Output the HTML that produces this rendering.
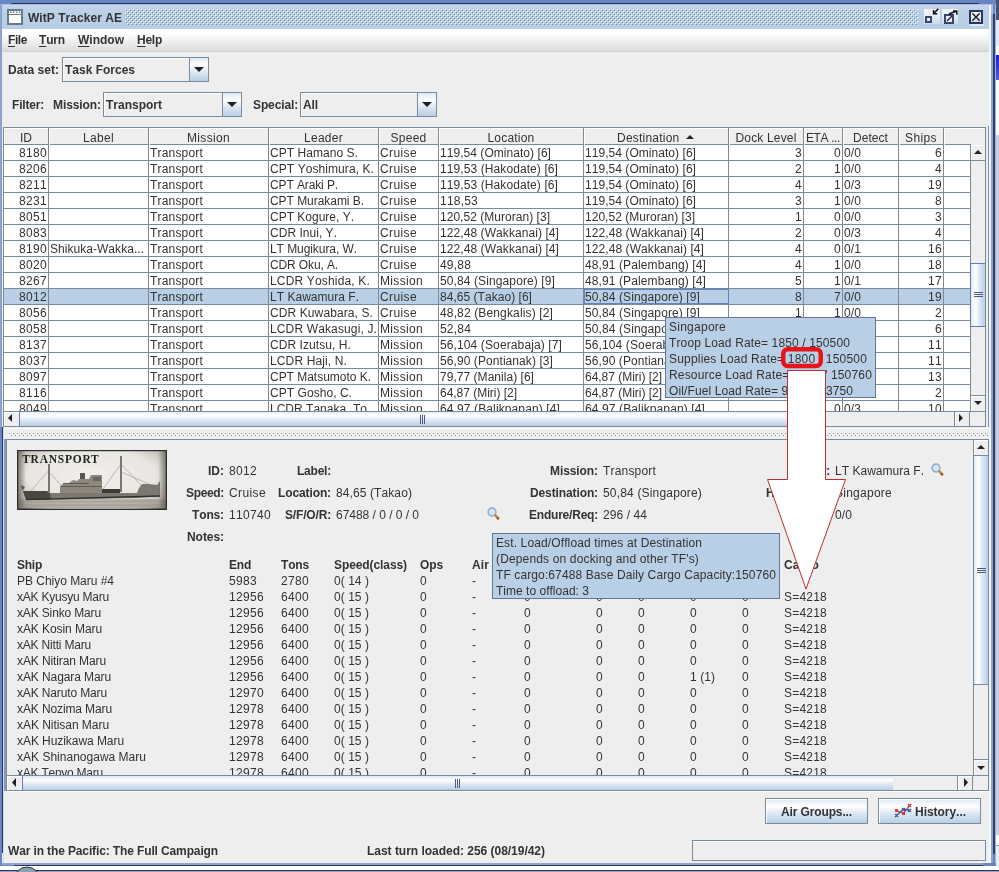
<!DOCTYPE html><html><head><meta charset="utf-8"><style>
*{margin:0;padding:0;box-sizing:border-box}
html,body{width:999px;height:872px;overflow:hidden;background:#6a85c4;position:relative}
.a{position:absolute}
.t{position:absolute;font-family:"Liberation Sans",sans-serif;font-size:12px;line-height:16px;color:#333;white-space:nowrap;font-kerning:none}
.b{font-weight:bold}
.grad{background:linear-gradient(#dde8f3 0%,#fff 30%,#dde8f3 60%,#b8cfe5 100%)}
.gradh{background:linear-gradient(to right,#dde8f3 0%,#fff 30%,#dde8f3 60%,#b8cfe5 100%)}
u{text-decoration-thickness:1px;text-underline-offset:2px}
</style></head><body><div id="w" style="position:absolute;left:0;top:0;width:999px;height:872px;overflow:hidden;will-change:transform">
<div class="a " style="left:0px;top:0px;width:999px;height:872px;background:#6a85c4"></div>
<div class="a " style="left:11px;top:3px;width:968px;height:1px;background:#2a3560"></div>
<div class="a " style="left:1px;top:4px;width:992px;height:859px;background:#a8bce0"></div>
<div class="a " style="left:2px;top:5px;width:987px;height:858px;background:#eeeeee"></div>
<div class="a " style="left:0px;top:4px;width:1px;height:423px;background:#8aa4dc"></div>
<div class="a " style="left:1px;top:5px;width:1px;height:422px;background:#8a9cc0"></div>
<div class="a " style="left:989px;top:5px;width:1px;height:858px;background:#f4f6fa"></div>
<div class="a " style="left:990px;top:5px;width:1px;height:858px;background:#f0f3f8"></div>
<div class="a " style="left:991px;top:14px;width:2px;height:849px;background:#8fa5cc"></div>
<div class="a " style="left:993px;top:14px;width:2px;height:840px;background:#2f3d6a"></div>
<div class="a " style="left:995px;top:4px;width:1px;height:859px;background:#a0b4e0"></div>
<div class="a " style="left:0px;top:427px;width:2px;height:436px;background:#6a85c4"></div>
<div class="a " style="left:2px;top:427px;width:1px;height:426px;background:#2a3560"></div>
<div class="a " style="left:3px;top:427px;width:1px;height:436px;background:#d0dcf0"></div>
<div class="a " style="left:4px;top:427px;width:2px;height:364px;background:#8898b8"></div>
<div class="a " style="left:2px;top:863px;width:991px;height:2px;background:#8fa5cc"></div>
<div class="a " style="left:14px;top:865px;width:969px;height:1px;background:#2a3560"></div>
<div class="a " style="left:983px;top:863px;width:13px;height:3px;background:#6a85c4"></div>
<div class="a " style="left:2px;top:5px;width:987px;height:24px;background:linear-gradient(#c4d6ea,#b8cfe5 40%,#b8cfe5)"></div>
<div class="a " style="left:2px;top:29px;width:987px;height:22px;background:linear-gradient(#ffffff 20%,#dcdcdc)"></div>
<div class="a " style="left:2px;top:51px;width:987px;height:1px;background:#d0d0d0"></div>
<svg class="a" style="left:7px;top:9px" width="16" height="16"><rect x="1" y="1" width="14" height="14" fill="#fff" stroke="#6a7a88" stroke-width="2"/><rect x="2" y="5" width="12" height="1" fill="#6a7a88"/>
<circle cx="3.8" cy="3.3" r="0.8" fill="#555"/><circle cx="6.8" cy="3.3" r="0.8" fill="#555"/><circle cx="9.8" cy="3.3" r="0.8" fill="#555"/><circle cx="12.6" cy="3.3" r="0.8" fill="#555"/></svg>
<div class="t b" style="left:28px;top:10px;letter-spacing:0.042px;">WitP Tracker AE</div>
<svg class="a" style="left:125px;top:9px" width="793" height="16"><defs><pattern id="bp" width="4" height="4" patternUnits="userSpaceOnUse"><rect x="0" y="0" width="1" height="1" fill="#fff"/><rect x="1" y="1" width="1" height="1" fill="#6a8ab4"/><rect x="2" y="2" width="1" height="1" fill="#fff"/><rect x="3" y="3" width="1" height="1" fill="#6a8ab4"/></pattern></defs><rect width="793" height="16" fill="url(#bp)"/></svg>
<svg class="a" style="left:920px;top:5px" width="70" height="23">
<defs><linearGradient id="tbg" x1="0" y1="0" x2="0" y2="1"><stop offset="0" stop-color="#f4f8fc"/><stop offset="0.5" stop-color="#e4ecf6"/><stop offset="1" stop-color="#c8d8ea"/></linearGradient></defs>
<rect x="4" y="4" width="16" height="15" fill="url(#tbg)"/>
<rect x="6" y="12" width="5" height="5" fill="#e8e8f8" stroke="#3a4570" stroke-width="2"/>
<path d="M18.3,3.8 L13.5,8.6 M13.5,5 L13.5,8.8 L17.3,8.8" stroke="#111" stroke-width="1.5" fill="none"/>
<rect x="22" y="4" width="16" height="15" fill="url(#tbg)"/>
<rect x="25" y="10" width="8" height="8" fill="#e8ecf8" stroke="#3a4570" stroke-width="2"/>
<path d="M27,16 L32,11" stroke="#111" stroke-width="1.1"/>
<path d="M29,9 L36.2,6.3 M33,6 L36.8,6 L36.8,9.8" stroke="#111" stroke-width="1.5" fill="none"/>
<rect x="50" y="6" width="12" height="12" fill="url(#tbg)" stroke="#2a3560" stroke-width="2"/>
<path d="M63,19 L63,20 L50,20" stroke="#fff" stroke-width="1.2" fill="none"/>
<path d="M52.3,8.3 L59.7,15.7 M59.7,8.3 L52.3,15.7" stroke="#111" stroke-width="1.3"/>
</svg>
<div class="t b" style="left:8px;top:32px;letter-spacing:-0.418px;"><u>F</u>ile</div>
<div class="t b" style="left:39px;top:32px;letter-spacing:-0.165px;"><u>T</u>urn</div>
<div class="t b" style="left:78px;top:32px;letter-spacing:0.003px;"><u>W</u>indow</div>
<div class="t b" style="left:137px;top:32px;letter-spacing:-0.251px;"><u>H</u>elp</div>
<div class="t b" style="left:8px;top:62px;letter-spacing:0.035px;">Data set:</div>
<div class="a " style="left:62px;top:57px;width:147px;height:25px;border:1px solid #7a8a99;background:#eeeeee"></div>
<div class="a " style="left:63px;top:58px;width:145px;height:1px;background:#fff"></div>
<div class="a " style="left:63px;top:58px;width:1px;height:23px;background:#fff"></div>
<div class="a grad" style="left:189px;top:57px;width:20px;height:25px;border:1px solid #7a8a99"></div>
<svg class="a" style="left:194px;top:67px" width="10" height="5"><polygon points="0,0 10,0 5.0,5" fill="#222"/></svg>
<div class="t b" style="left:65px;top:62px;letter-spacing:-0.003px;">Task Forces</div>
<div class="t b" style="left:12px;top:97px;letter-spacing:-0.191px;">Filter:</div>
<div class="t b" style="left:53px;top:97px;letter-spacing:-0.083px;">Mission:</div>
<div class="a " style="left:103px;top:92px;width:139px;height:25px;border:1px solid #7a8a99;background:#eeeeee"></div>
<div class="a " style="left:104px;top:93px;width:137px;height:1px;background:#fff"></div>
<div class="a " style="left:104px;top:93px;width:1px;height:23px;background:#fff"></div>
<div class="a grad" style="left:222px;top:92px;width:20px;height:25px;border:1px solid #7a8a99"></div>
<svg class="a" style="left:227px;top:102px" width="10" height="5"><polygon points="0,0 10,0 5.0,5" fill="#222"/></svg>
<div class="t b" style="left:106px;top:97px;letter-spacing:-0.000px;">Transport</div>
<div class="t b" style="left:253px;top:97px;letter-spacing:-0.127px;">Special:</div>
<div class="a " style="left:300px;top:92px;width:137px;height:25px;border:1px solid #7a8a99;background:#eeeeee"></div>
<div class="a " style="left:301px;top:93px;width:135px;height:1px;background:#fff"></div>
<div class="a " style="left:301px;top:93px;width:1px;height:23px;background:#fff"></div>
<div class="a grad" style="left:417px;top:92px;width:20px;height:25px;border:1px solid #7a8a99"></div>
<svg class="a" style="left:422px;top:102px" width="10" height="5"><polygon points="0,0 10,0 5.0,5" fill="#222"/></svg>
<div class="t b" style="left:303px;top:97px;letter-spacing:-0.111px;">All</div>
<div class="a " style="left:3px;top:127px;width:984px;height:300px;background:#eeeeee"></div>
<div class="a " style="left:3px;top:127px;width:1px;height:300px;background:#7a8a99"></div>
<div class="a " style="left:3px;top:127px;width:983px;height:1px;background:#7a8a99"></div>
<div class="a " style="left:4px;top:145px;width:966px;height:266px;background:#fff"></div>
<div class="a " style="left:4px;top:128px;width:981px;height:16px;background:#eeeeee"></div>
<div class="a " style="left:4px;top:128px;width:981px;height:1px;background:#fff"></div>
<div class="a " style="left:4px;top:128px;width:1px;height:16px;background:#fff"></div>
<div class="a " style="left:48px;top:128px;width:1px;height:17px;background:#7a8a99"></div>
<div class="a " style="left:4px;top:144px;width:45px;height:1px;background:#7a8a99"></div>
<div class="a " style="left:49px;top:128px;width:1px;height:16px;background:#fff"></div>
<div class="a " style="left:148px;top:128px;width:1px;height:17px;background:#7a8a99"></div>
<div class="a " style="left:50px;top:144px;width:99px;height:1px;background:#7a8a99"></div>
<div class="a " style="left:149px;top:128px;width:1px;height:16px;background:#fff"></div>
<div class="a " style="left:268px;top:128px;width:1px;height:17px;background:#7a8a99"></div>
<div class="a " style="left:150px;top:144px;width:119px;height:1px;background:#7a8a99"></div>
<div class="a " style="left:269px;top:128px;width:1px;height:16px;background:#fff"></div>
<div class="a " style="left:378px;top:128px;width:1px;height:17px;background:#7a8a99"></div>
<div class="a " style="left:270px;top:144px;width:109px;height:1px;background:#7a8a99"></div>
<div class="a " style="left:379px;top:128px;width:1px;height:16px;background:#fff"></div>
<div class="a " style="left:438px;top:128px;width:1px;height:17px;background:#7a8a99"></div>
<div class="a " style="left:380px;top:144px;width:59px;height:1px;background:#7a8a99"></div>
<div class="a " style="left:439px;top:128px;width:1px;height:16px;background:#fff"></div>
<div class="a " style="left:583px;top:128px;width:1px;height:17px;background:#7a8a99"></div>
<div class="a " style="left:440px;top:144px;width:144px;height:1px;background:#7a8a99"></div>
<div class="a " style="left:584px;top:128px;width:1px;height:16px;background:#fff"></div>
<div class="a " style="left:728px;top:128px;width:1px;height:17px;background:#7a8a99"></div>
<div class="a " style="left:585px;top:144px;width:144px;height:1px;background:#7a8a99"></div>
<div class="a " style="left:729px;top:128px;width:1px;height:16px;background:#fff"></div>
<div class="a " style="left:803px;top:128px;width:1px;height:17px;background:#7a8a99"></div>
<div class="a " style="left:730px;top:144px;width:74px;height:1px;background:#7a8a99"></div>
<div class="a " style="left:804px;top:128px;width:1px;height:16px;background:#fff"></div>
<div class="a " style="left:842px;top:128px;width:1px;height:17px;background:#7a8a99"></div>
<div class="a " style="left:805px;top:144px;width:38px;height:1px;background:#7a8a99"></div>
<div class="a " style="left:843px;top:128px;width:1px;height:16px;background:#fff"></div>
<div class="a " style="left:898px;top:128px;width:1px;height:17px;background:#7a8a99"></div>
<div class="a " style="left:844px;top:144px;width:55px;height:1px;background:#7a8a99"></div>
<div class="a " style="left:899px;top:128px;width:1px;height:16px;background:#fff"></div>
<div class="a " style="left:943px;top:128px;width:1px;height:17px;background:#7a8a99"></div>
<div class="a " style="left:900px;top:144px;width:44px;height:1px;background:#7a8a99"></div>
<div class="a " style="left:944px;top:128px;width:1px;height:16px;background:#fff"></div>
<div class="a " style="left:945px;top:144px;width:26px;height:1px;background:#7a8a99"></div>
<div class="t " style="left:4px;width:44px;text-align:center;top:130px;letter-spacing:0.000px;">ID</div>
<div class="t " style="left:49px;width:99px;text-align:center;top:130px;letter-spacing:0.328px;">Label</div>
<div class="t " style="left:149px;width:119px;text-align:center;top:130px;letter-spacing:0.332px;">Mission</div>
<div class="t " style="left:269px;width:109px;text-align:center;top:130px;letter-spacing:0.272px;">Leader</div>
<div class="t " style="left:379px;width:59px;text-align:center;top:130px;letter-spacing:0.260px;">Speed</div>
<div class="t " style="left:439px;width:144px;text-align:center;top:130px;letter-spacing:0.204px;">Location</div>
<div class="t " style="left:584px;width:144px;text-align:center;top:130px;letter-spacing:0.219px;">Destination <span style="display:inline-block;width:12px"></span></div>
<svg class="a" style="left:686px;top:135px" width="8" height="4"><polygon points="0,4 8,4 4.0,0" fill="#222"/></svg>
<div class="t " style="left:729px;width:74px;text-align:center;top:130px;letter-spacing:0.164px;">Dock Level</div>
<div class="t " style="left:806px;top:130px;letter-spacing:-0.382px;">ETA ...</div>
<div class="t " style="left:843px;width:55px;text-align:center;top:130px;letter-spacing:0.053px;">Detect</div>
<div class="t " style="left:899px;width:44px;text-align:center;top:130px;letter-spacing:0.396px;">Ships</div>
<div class="a " style="left:943px;top:128px;width:1px;height:17px;background:#7a8a99"></div>
<div class="a" style="left:4px;top:145px;width:966px;height:266px;overflow:hidden">
<div class="a " style="left:0px;top:15px;width:967px;height:1px;background:#7a8a99"></div>
<div class="t" style="left:0px;width:43px;text-align:right;top:0px;letter-spacing:0.326px;">8180</div>
<div class="t " style="left:146px;top:0px;letter-spacing:0.183px;">Transport</div>
<div class="t " style="left:266px;top:0px;letter-spacing:0.049px;">CPT Hamano S.</div>
<div class="t " style="left:376px;top:0px;letter-spacing:0.387px;">Cruise</div>
<div class="t " style="left:436px;top:0px;letter-spacing:0.047px;">119,54 (Ominato) [6]</div>
<div class="t " style="left:581px;top:0px;letter-spacing:0.047px;">119,54 (Ominato) [6]</div>
<div class="t" style="left:725px;width:73px;text-align:right;top:0px;letter-spacing:0.326px;">3</div>
<div class="t" style="left:800px;width:37px;text-align:right;top:0px;letter-spacing:0.326px;">0</div>
<div class="t " style="left:840px;top:0px;letter-spacing:0.106px;">0/0</div>
<div class="t" style="left:895px;width:43px;text-align:right;top:0px;letter-spacing:0.326px;">6</div>
<div class="a " style="left:0px;top:31px;width:967px;height:1px;background:#7a8a99"></div>
<div class="t" style="left:0px;width:43px;text-align:right;top:16px;letter-spacing:0.326px;">8206</div>
<div class="t " style="left:146px;top:16px;letter-spacing:0.183px;">Transport</div>
<div class="t " style="left:266px;top:16px;letter-spacing:0.077px;">CPT Yoshimura, K.</div>
<div class="t " style="left:376px;top:16px;letter-spacing:0.387px;">Cruise</div>
<div class="t " style="left:436px;top:16px;letter-spacing:0.092px;">119,53 (Hakodate) [6]</div>
<div class="t " style="left:581px;top:16px;letter-spacing:0.047px;">119,54 (Ominato) [6]</div>
<div class="t" style="left:725px;width:73px;text-align:right;top:16px;letter-spacing:0.326px;">2</div>
<div class="t" style="left:800px;width:37px;text-align:right;top:16px;letter-spacing:0.326px;">1</div>
<div class="t " style="left:840px;top:16px;letter-spacing:0.106px;">0/0</div>
<div class="t" style="left:895px;width:43px;text-align:right;top:16px;letter-spacing:0.326px;">4</div>
<div class="a " style="left:0px;top:47px;width:967px;height:1px;background:#7a8a99"></div>
<div class="t" style="left:0px;width:43px;text-align:right;top:32px;letter-spacing:0.326px;">8211</div>
<div class="t " style="left:146px;top:32px;letter-spacing:0.183px;">Transport</div>
<div class="t " style="left:266px;top:32px;letter-spacing:-0.112px;">CPT Araki P.</div>
<div class="t " style="left:376px;top:32px;letter-spacing:0.387px;">Cruise</div>
<div class="t " style="left:436px;top:32px;letter-spacing:0.092px;">119,53 (Hakodate) [6]</div>
<div class="t " style="left:581px;top:32px;letter-spacing:0.047px;">119,54 (Ominato) [6]</div>
<div class="t" style="left:725px;width:73px;text-align:right;top:32px;letter-spacing:0.326px;">4</div>
<div class="t" style="left:800px;width:37px;text-align:right;top:32px;letter-spacing:0.326px;">1</div>
<div class="t " style="left:840px;top:32px;letter-spacing:0.106px;">0/3</div>
<div class="t" style="left:895px;width:43px;text-align:right;top:32px;letter-spacing:0.326px;">19</div>
<div class="a " style="left:0px;top:63px;width:967px;height:1px;background:#7a8a99"></div>
<div class="t" style="left:0px;width:43px;text-align:right;top:48px;letter-spacing:0.326px;">8231</div>
<div class="t " style="left:146px;top:48px;letter-spacing:0.183px;">Transport</div>
<div class="t " style="left:266px;top:48px;letter-spacing:-0.045px;">CPT Murakami B.</div>
<div class="t " style="left:376px;top:48px;letter-spacing:0.387px;">Cruise</div>
<div class="t " style="left:436px;top:48px;letter-spacing:0.216px;">118,53</div>
<div class="t " style="left:581px;top:48px;letter-spacing:0.047px;">119,54 (Ominato) [6]</div>
<div class="t" style="left:725px;width:73px;text-align:right;top:48px;letter-spacing:0.326px;">3</div>
<div class="t" style="left:800px;width:37px;text-align:right;top:48px;letter-spacing:0.326px;">1</div>
<div class="t " style="left:840px;top:48px;letter-spacing:0.106px;">0/0</div>
<div class="t" style="left:895px;width:43px;text-align:right;top:48px;letter-spacing:0.326px;">8</div>
<div class="a " style="left:0px;top:79px;width:967px;height:1px;background:#7a8a99"></div>
<div class="t" style="left:0px;width:43px;text-align:right;top:64px;letter-spacing:0.326px;">8051</div>
<div class="t " style="left:146px;top:64px;letter-spacing:0.183px;">Transport</div>
<div class="t " style="left:266px;top:64px;letter-spacing:-0.003px;">CPT Kogure, Y.</div>
<div class="t " style="left:376px;top:64px;letter-spacing:0.387px;">Cruise</div>
<div class="t " style="left:436px;top:64px;letter-spacing:0.031px;">120,52 (Muroran) [3]</div>
<div class="t " style="left:581px;top:64px;letter-spacing:0.031px;">120,52 (Muroran) [3]</div>
<div class="t" style="left:725px;width:73px;text-align:right;top:64px;letter-spacing:0.326px;">1</div>
<div class="t" style="left:800px;width:37px;text-align:right;top:64px;letter-spacing:0.326px;">0</div>
<div class="t " style="left:840px;top:64px;letter-spacing:0.106px;">0/0</div>
<div class="t" style="left:895px;width:43px;text-align:right;top:64px;letter-spacing:0.326px;">3</div>
<div class="a " style="left:0px;top:95px;width:967px;height:1px;background:#7a8a99"></div>
<div class="t" style="left:0px;width:43px;text-align:right;top:80px;letter-spacing:0.326px;">8083</div>
<div class="t " style="left:146px;top:80px;letter-spacing:0.183px;">Transport</div>
<div class="t " style="left:266px;top:80px;letter-spacing:0.026px;">CDR Inui, Y.</div>
<div class="t " style="left:376px;top:80px;letter-spacing:0.387px;">Cruise</div>
<div class="t " style="left:436px;top:80px;letter-spacing:0.077px;">122,48 (Wakkanai) [4]</div>
<div class="t " style="left:581px;top:80px;letter-spacing:0.077px;">122,48 (Wakkanai) [4]</div>
<div class="t" style="left:725px;width:73px;text-align:right;top:80px;letter-spacing:0.326px;">2</div>
<div class="t" style="left:800px;width:37px;text-align:right;top:80px;letter-spacing:0.326px;">0</div>
<div class="t " style="left:840px;top:80px;letter-spacing:0.106px;">0/3</div>
<div class="t" style="left:895px;width:43px;text-align:right;top:80px;letter-spacing:0.326px;">4</div>
<div class="a " style="left:0px;top:111px;width:967px;height:1px;background:#7a8a99"></div>
<div class="t" style="left:0px;width:43px;text-align:right;top:96px;letter-spacing:0.326px;">8190</div>
<div class="t " style="left:46px;top:96px;letter-spacing:0.040px;">Shikuka-Wakka...</div>
<div class="t " style="left:146px;top:96px;letter-spacing:0.183px;">Transport</div>
<div class="t " style="left:266px;top:96px;letter-spacing:-0.068px;">LT Mugikura, W.</div>
<div class="t " style="left:376px;top:96px;letter-spacing:0.387px;">Cruise</div>
<div class="t " style="left:436px;top:96px;letter-spacing:0.077px;">122,48 (Wakkanai) [4]</div>
<div class="t " style="left:581px;top:96px;letter-spacing:0.077px;">122,48 (Wakkanai) [4]</div>
<div class="t" style="left:725px;width:73px;text-align:right;top:96px;letter-spacing:0.326px;">4</div>
<div class="t" style="left:800px;width:37px;text-align:right;top:96px;letter-spacing:0.326px;">0</div>
<div class="t " style="left:840px;top:96px;letter-spacing:0.106px;">0/1</div>
<div class="t" style="left:895px;width:43px;text-align:right;top:96px;letter-spacing:0.326px;">16</div>
<div class="a " style="left:0px;top:127px;width:967px;height:1px;background:#7a8a99"></div>
<div class="t" style="left:0px;width:43px;text-align:right;top:112px;letter-spacing:0.326px;">8020</div>
<div class="t " style="left:146px;top:112px;letter-spacing:0.183px;">Transport</div>
<div class="t " style="left:266px;top:112px;letter-spacing:-0.122px;">CDR Oku, A.</div>
<div class="t " style="left:376px;top:112px;letter-spacing:0.387px;">Cruise</div>
<div class="t " style="left:436px;top:112px;letter-spacing:0.194px;">49,88</div>
<div class="t " style="left:581px;top:112px;letter-spacing:0.108px;">48,91 (Palembang) [4]</div>
<div class="t" style="left:725px;width:73px;text-align:right;top:112px;letter-spacing:0.326px;">4</div>
<div class="t" style="left:800px;width:37px;text-align:right;top:112px;letter-spacing:0.326px;">1</div>
<div class="t " style="left:840px;top:112px;letter-spacing:0.106px;">0/0</div>
<div class="t" style="left:895px;width:43px;text-align:right;top:112px;letter-spacing:0.326px;">18</div>
<div class="a " style="left:0px;top:143px;width:967px;height:1px;background:#7a8a99"></div>
<div class="t" style="left:0px;width:43px;text-align:right;top:128px;letter-spacing:0.326px;">8267</div>
<div class="t " style="left:146px;top:128px;letter-spacing:0.183px;">Transport</div>
<div class="t " style="left:266px;top:128px;letter-spacing:0.164px;">LCDR Yoshida, K.</div>
<div class="t " style="left:376px;top:128px;letter-spacing:0.332px;">Mission</div>
<div class="t " style="left:436px;top:128px;letter-spacing:0.108px;">50,84 (Singapore) [9]</div>
<div class="t " style="left:581px;top:128px;letter-spacing:0.108px;">48,91 (Palembang) [4]</div>
<div class="t" style="left:725px;width:73px;text-align:right;top:128px;letter-spacing:0.326px;">5</div>
<div class="t" style="left:800px;width:37px;text-align:right;top:128px;letter-spacing:0.326px;">1</div>
<div class="t " style="left:840px;top:128px;letter-spacing:0.106px;">0/1</div>
<div class="t" style="left:895px;width:43px;text-align:right;top:128px;letter-spacing:0.326px;">17</div>
<div class="a " style="left:0px;top:144px;width:967px;height:15px;background:#b8cfe5"></div>
<div class="a " style="left:0px;top:159px;width:967px;height:1px;background:#7a8a99"></div>
<div class="t" style="left:0px;width:43px;text-align:right;top:144px;letter-spacing:0.326px;">8012</div>
<div class="t " style="left:146px;top:144px;letter-spacing:0.183px;">Transport</div>
<div class="t " style="left:266px;top:144px;letter-spacing:0.022px;">LT Kawamura F.</div>
<div class="t " style="left:376px;top:144px;letter-spacing:0.387px;">Cruise</div>
<div class="t " style="left:436px;top:144px;letter-spacing:0.036px;">84,65 (Takao) [6]</div>
<div class="t " style="left:581px;top:144px;letter-spacing:0.108px;">50,84 (Singapore) [9]</div>
<div class="t" style="left:725px;width:73px;text-align:right;top:144px;letter-spacing:0.326px;">8</div>
<div class="t" style="left:800px;width:37px;text-align:right;top:144px;letter-spacing:0.326px;">7</div>
<div class="t " style="left:840px;top:144px;letter-spacing:0.106px;">0/0</div>
<div class="t" style="left:895px;width:43px;text-align:right;top:144px;letter-spacing:0.326px;">19</div>
<div class="a " style="left:0px;top:175px;width:967px;height:1px;background:#7a8a99"></div>
<div class="t" style="left:0px;width:43px;text-align:right;top:160px;letter-spacing:0.326px;">8056</div>
<div class="t " style="left:146px;top:160px;letter-spacing:0.183px;">Transport</div>
<div class="t " style="left:266px;top:160px;letter-spacing:0.102px;">CDR Kuwabara, S.</div>
<div class="t " style="left:376px;top:160px;letter-spacing:0.387px;">Cruise</div>
<div class="t " style="left:436px;top:160px;letter-spacing:0.140px;">48,82 (Bengkalis) [2]</div>
<div class="t " style="left:581px;top:160px;letter-spacing:0.108px;">50,84 (Singapore) [9]</div>
<div class="t" style="left:725px;width:73px;text-align:right;top:160px;letter-spacing:0.326px;">1</div>
<div class="t" style="left:800px;width:37px;text-align:right;top:160px;letter-spacing:0.326px;">1</div>
<div class="t " style="left:840px;top:160px;letter-spacing:0.106px;">0/0</div>
<div class="t" style="left:895px;width:43px;text-align:right;top:160px;letter-spacing:0.326px;">2</div>
<div class="a " style="left:0px;top:191px;width:967px;height:1px;background:#7a8a99"></div>
<div class="t" style="left:0px;width:43px;text-align:right;top:176px;letter-spacing:0.326px;">8058</div>
<div class="t " style="left:146px;top:176px;letter-spacing:0.183px;">Transport</div>
<div class="t " style="left:266px;top:176px;letter-spacing:0.136px;">LCDR Wakasugi, J.</div>
<div class="t " style="left:376px;top:176px;letter-spacing:0.332px;">Mission</div>
<div class="t " style="left:436px;top:176px;letter-spacing:0.194px;">52,84</div>
<div class="t " style="left:581px;top:176px;letter-spacing:0.108px;">50,84 (Singapore) [9]</div>
<div class="t" style="left:725px;width:73px;text-align:right;top:176px;letter-spacing:0.326px;">3</div>
<div class="t" style="left:800px;width:37px;text-align:right;top:176px;letter-spacing:0.326px;">1</div>
<div class="t " style="left:840px;top:176px;letter-spacing:0.106px;">0/0</div>
<div class="t" style="left:895px;width:43px;text-align:right;top:176px;letter-spacing:0.326px;">6</div>
<div class="a " style="left:0px;top:207px;width:967px;height:1px;background:#7a8a99"></div>
<div class="t" style="left:0px;width:43px;text-align:right;top:192px;letter-spacing:0.326px;">8137</div>
<div class="t " style="left:146px;top:192px;letter-spacing:0.183px;">Transport</div>
<div class="t " style="left:266px;top:192px;letter-spacing:0.070px;">CDR Izutsu, H.</div>
<div class="t " style="left:376px;top:192px;letter-spacing:0.332px;">Mission</div>
<div class="t " style="left:436px;top:192px;letter-spacing:0.118px;">56,104 (Soerabaja) [7]</div>
<div class="t " style="left:581px;top:192px;letter-spacing:0.118px;">56,104 (Soerabaja) [7]</div>
<div class="t" style="left:725px;width:73px;text-align:right;top:192px;letter-spacing:0.326px;">3</div>
<div class="t" style="left:800px;width:37px;text-align:right;top:192px;letter-spacing:0.326px;">0</div>
<div class="t " style="left:840px;top:192px;letter-spacing:0.106px;">0/0</div>
<div class="t" style="left:895px;width:43px;text-align:right;top:192px;letter-spacing:0.326px;">11</div>
<div class="a " style="left:0px;top:223px;width:967px;height:1px;background:#7a8a99"></div>
<div class="t" style="left:0px;width:43px;text-align:right;top:208px;letter-spacing:0.326px;">8037</div>
<div class="t " style="left:146px;top:208px;letter-spacing:0.183px;">Transport</div>
<div class="t " style="left:266px;top:208px;letter-spacing:0.127px;">LCDR Haji, N.</div>
<div class="t " style="left:376px;top:208px;letter-spacing:0.332px;">Mission</div>
<div class="t " style="left:436px;top:208px;letter-spacing:0.076px;">56,90 (Pontianak) [3]</div>
<div class="t " style="left:581px;top:208px;letter-spacing:0.076px;">56,90 (Pontianak) [3]</div>
<div class="t" style="left:725px;width:73px;text-align:right;top:208px;letter-spacing:0.326px;">3</div>
<div class="t" style="left:800px;width:37px;text-align:right;top:208px;letter-spacing:0.326px;">0</div>
<div class="t " style="left:840px;top:208px;letter-spacing:0.106px;">0/0</div>
<div class="t" style="left:895px;width:43px;text-align:right;top:208px;letter-spacing:0.326px;">11</div>
<div class="a " style="left:0px;top:239px;width:967px;height:1px;background:#7a8a99"></div>
<div class="t" style="left:0px;width:43px;text-align:right;top:224px;letter-spacing:0.326px;">8097</div>
<div class="t " style="left:146px;top:224px;letter-spacing:0.183px;">Transport</div>
<div class="t " style="left:266px;top:224px;letter-spacing:-0.023px;">CPT Matsumoto K.</div>
<div class="t " style="left:376px;top:224px;letter-spacing:0.332px;">Mission</div>
<div class="t " style="left:436px;top:224px;letter-spacing:0.034px;">79,77 (Manila) [6]</div>
<div class="t " style="left:581px;top:224px;letter-spacing:-0.022px;">64,87 (Miri) [2]</div>
<div class="t" style="left:725px;width:73px;text-align:right;top:224px;letter-spacing:0.326px;">3</div>
<div class="t" style="left:800px;width:37px;text-align:right;top:224px;letter-spacing:0.326px;">0</div>
<div class="t " style="left:840px;top:224px;letter-spacing:0.106px;">0/0</div>
<div class="t" style="left:895px;width:43px;text-align:right;top:224px;letter-spacing:0.326px;">13</div>
<div class="a " style="left:0px;top:255px;width:967px;height:1px;background:#7a8a99"></div>
<div class="t" style="left:0px;width:43px;text-align:right;top:240px;letter-spacing:0.326px;">8116</div>
<div class="t " style="left:146px;top:240px;letter-spacing:0.183px;">Transport</div>
<div class="t " style="left:266px;top:240px;letter-spacing:0.049px;">CPT Gosho, C.</div>
<div class="t " style="left:376px;top:240px;letter-spacing:0.332px;">Mission</div>
<div class="t " style="left:436px;top:240px;letter-spacing:-0.022px;">64,87 (Miri) [2]</div>
<div class="t " style="left:581px;top:240px;letter-spacing:-0.022px;">64,87 (Miri) [2]</div>
<div class="t" style="left:725px;width:73px;text-align:right;top:240px;letter-spacing:0.326px;">3</div>
<div class="t" style="left:800px;width:37px;text-align:right;top:240px;letter-spacing:0.326px;">0</div>
<div class="t " style="left:840px;top:240px;letter-spacing:0.106px;">0/0</div>
<div class="t" style="left:895px;width:43px;text-align:right;top:240px;letter-spacing:0.326px;">2</div>
<div class="a " style="left:0px;top:271px;width:967px;height:1px;background:#7a8a99"></div>
<div class="t" style="left:0px;width:43px;text-align:right;top:256px;letter-spacing:0.326px;">8049</div>
<div class="t " style="left:146px;top:256px;letter-spacing:0.183px;">Transport</div>
<div class="t " style="left:266px;top:256px;letter-spacing:0.016px;">LCDR Tanaka, To...</div>
<div class="t " style="left:376px;top:256px;letter-spacing:0.332px;">Mission</div>
<div class="t " style="left:436px;top:256px;letter-spacing:0.118px;">64,97 (Balikpapan) [4]</div>
<div class="t " style="left:581px;top:256px;letter-spacing:0.118px;">64,97 (Balikpapan) [4]</div>
<div class="t" style="left:725px;width:73px;text-align:right;top:256px;letter-spacing:0.326px;">3</div>
<div class="t" style="left:800px;width:37px;text-align:right;top:256px;letter-spacing:0.326px;">0</div>
<div class="t " style="left:840px;top:256px;letter-spacing:0.106px;">0/3</div>
<div class="t" style="left:895px;width:43px;text-align:right;top:256px;letter-spacing:0.326px;">10</div>
<div class="a " style="left:44px;top:0px;width:1px;height:266px;background:#7a8a99"></div>
<div class="a " style="left:144px;top:0px;width:1px;height:266px;background:#7a8a99"></div>
<div class="a " style="left:264px;top:0px;width:1px;height:266px;background:#7a8a99"></div>
<div class="a " style="left:374px;top:0px;width:1px;height:266px;background:#7a8a99"></div>
<div class="a " style="left:434px;top:0px;width:1px;height:266px;background:#7a8a99"></div>
<div class="a " style="left:579px;top:0px;width:1px;height:266px;background:#7a8a99"></div>
<div class="a " style="left:724px;top:0px;width:1px;height:266px;background:#7a8a99"></div>
<div class="a " style="left:799px;top:0px;width:1px;height:266px;background:#7a8a99"></div>
<div class="a " style="left:838px;top:0px;width:1px;height:266px;background:#7a8a99"></div>
<div class="a " style="left:894px;top:0px;width:1px;height:266px;background:#7a8a99"></div>
<div class="a " style="left:939px;top:0px;width:1px;height:266px;background:#7a8a99"></div>
<div class="a " style="left:939px;top:0px;width:1px;height:266px;background:#7a8a99"></div>
<div class="a " style="left:580px;top:144px;width:145px;height:15px;border:1px solid #6382bf"></div>
</div>
<div class="a " style="left:4px;top:411px;width:966px;height:1px;background:#7a8a99"></div>
<div class="a " style="left:970px;top:145px;width:15px;height:266px;background:#eeeeee"></div>
<div class="a " style="left:970px;top:145px;width:1px;height:266px;background:#7a8a99"></div>
<div class="a " style="left:971px;top:145px;width:14px;height:1px;background:#fff"></div>
<div class="a " style="left:971px;top:145px;width:1px;height:15px;background:#fff"></div>
<div class="a " style="left:971px;top:160px;width:14px;height:1px;background:#7a8a99"></div>
<svg class="a" style="left:974px;top:150px" width="8" height="4"><polygon points="0,4 8,4 4.0,0" fill="#222"/></svg>
<div class="a " style="left:971px;top:395px;width:14px;height:1px;background:#7a8a99"></div>
<div class="a " style="left:971px;top:396px;width:14px;height:1px;background:#fff"></div>
<div class="a " style="left:971px;top:396px;width:1px;height:15px;background:#fff"></div>
<svg class="a" style="left:974px;top:401px" width="8" height="4"><polygon points="0,0 8,0 4.0,4" fill="#222"/></svg>
<div class="a gradh" style="left:970px;top:263px;width:15px;height:64px;border:1px solid #6a7ab0;border-right:none"></div>
<div class="a " style="left:974px;top:292px;width:9px;height:1px;background:#505a80"></div>
<div class="a " style="left:974px;top:294px;width:9px;height:1px;background:#505a80"></div>
<div class="a " style="left:974px;top:296px;width:9px;height:1px;background:#505a80"></div>
<div class="a " style="left:985px;top:127px;width:1px;height:300px;background:#7a8a99"></div>
<div class="a " style="left:988px;top:126px;width:1px;height:301px;background:#8090b0"></div>
<div class="a " style="left:4px;top:411px;width:981px;height:15px;background:#eeeeee"></div>
<div class="a " style="left:3px;top:426px;width:983px;height:1px;background:#7a8a99"></div>
<div class="a " style="left:4px;top:412px;width:15px;height:1px;background:#fff"></div>
<div class="a " style="left:4px;top:412px;width:1px;height:14px;background:#fff"></div>
<div class="a " style="left:19px;top:411px;width:1px;height:15px;background:#7a8a99"></div>
<svg class="a" style="left:8px;top:414px" width="4" height="8"><polygon points="4,0 4,8 0,4.0" fill="#222"/></svg>
<div class="a grad" style="left:19px;top:411px;width:807px;height:15px;border:1px solid #6a7ab0;border-top:none;border-bottom:none"></div>
<div class="a " style="left:420px;top:415px;width:1px;height:9px;background:#505a80"></div>
<div class="a " style="left:422px;top:415px;width:1px;height:9px;background:#505a80"></div>
<div class="a " style="left:424px;top:415px;width:1px;height:9px;background:#505a80"></div>
<div class="a " style="left:954px;top:411px;width:1px;height:15px;background:#7a8a99"></div>
<div class="a " style="left:969px;top:411px;width:1px;height:15px;background:#7a8a99"></div>
<div class="a " style="left:955px;top:412px;width:14px;height:1px;background:#fff"></div>
<div class="a " style="left:955px;top:412px;width:1px;height:14px;background:#fff"></div>
<svg class="a" style="left:959px;top:414px" width="4" height="8"><polygon points="0,0 0,8 4,4.0" fill="#222"/></svg>
<div class="a " style="left:4px;top:411px;width:981px;height:1px;background:#7a8a99"></div>
<div class="a " style="left:4px;top:427px;width:985px;height:12px;background:#eeeeee"></div>
<div class="a " style="left:4px;top:428px;width:984px;height:1px;background:#fff"></div>
<svg class="a" style="left:8px;top:432px" width="980" height="5"><defs><pattern id="sp" width="4" height="4" patternUnits="userSpaceOnUse"><rect x="1" y="1" width="1" height="1" fill="#8a96a6"/><rect x="3" y="3" width="1" height="1" fill="#8a96a6"/></pattern></defs><rect width="980" height="5" fill="url(#sp)"/></svg>
<div class="a " style="left:6px;top:439px;width:1px;height:352px;background:#7a8a99"></div>
<div class="a " style="left:6px;top:439px;width:983px;height:1px;background:#7a8a99"></div>
<div class="a " style="left:988px;top:439px;width:1px;height:352px;background:#7a8a99"></div>
<div class="a " style="left:6px;top:790px;width:983px;height:1px;background:#7a8a99"></div>
<svg class="a" style="left:17px;top:450px" width="150" height="60" viewBox="0 0 150 60">
<defs><radialGradient id="vg" cx="50%" cy="42%" r="72%"><stop offset="0" stop-color="#f0efeb"/><stop offset="0.6" stop-color="#e8e6e1"/><stop offset="0.86" stop-color="#bdb9b1"/><stop offset="1" stop-color="#6a665e"/></radialGradient>
<linearGradient id="lr" x1="0" y1="0" x2="1" y2="0"><stop offset="0" stop-color="#5a564e" stop-opacity="0.8"/><stop offset="0.06" stop-color="#5a564e" stop-opacity="0"/><stop offset="0.94" stop-color="#5a564e" stop-opacity="0"/><stop offset="1" stop-color="#5a564e" stop-opacity="0.8"/></linearGradient></defs>
<rect x="0" y="0" width="150" height="60" fill="url(#vg)"/>
<rect x="1" y="49" width="148" height="9" fill="#a8a49c" opacity="0.75"/>
<path d="M1,52 L149,51 M1,55 L149,55" stroke="#8a867e" stroke-width="0.8" opacity="0.6"/>
<path d="M32,42 L32,14 M104,42 L104,6" stroke="#5e5a52" stroke-width="1.6"/>
<path d="M32,20 L14,41 M32,22 L45,36 M104,14 L86,39 M104,14 L124,35 M104,22 L132,34" stroke="#8a867e" stroke-width="0.5"/>
<rect x="63" y="23" width="5" height="9" fill="#5a5650"/>
<path d="M43,43 L43,36 L46,34 L52,33 L56,30 L60,31 L62,29 L72,29 L74,25 L85,25 L85,43 Z" fill="#8c887f"/>
<path d="M44,36.5 L85,36.5 M46,33.5 L72,33.5" stroke="#5a564e" stroke-width="0.9"/>
<path d="M76,27 L84,27 L84,31 L76,31 Z" fill="#6a665e"/>
<path d="M85,39 L103,39 L103,43 L85,43 Z" fill="#3e3a34"/>
<path d="M6,41 L30,41 L34,43 L120,43 L122,38 L125,34 L132,34 L140,35 L143,31 L143,46 L120,48 L40,49.5 L9,50 Z" fill="#7c786f"/>
<path d="M6,41 L30,41 L33,44 L34,49.5 L9,50 Z" fill="#4a463f"/>
<path d="M9,49.6 L143,46" stroke="#34302a" stroke-width="1.4"/>
<path d="M5,41 L4,35 L8,37 Z" fill="#555"/>
<rect x="0" y="0" width="150" height="60" fill="url(#lr)"/>
<rect x="0.6" y="0.6" width="148.8" height="58.8" fill="none" stroke="#2e2c28" stroke-width="1.2"/>
<text x="5.2" y="12.8" font-family="Liberation Serif" font-weight="bold" font-size="11.5" fill="#222" letter-spacing="0.75">TRANSPORT</text>
</svg>
<div class="t b" style="right:775px;top:463px;letter-spacing:0.001px;">ID:</div>
<div class="t " style="left:229px;top:463px;letter-spacing:0.326px;">8012</div>
<div class="t b" style="right:775px;top:485px;letter-spacing:-0.335px;">Speed:</div>
<div class="t " style="left:229px;top:485px;letter-spacing:0.387px;">Cruise</div>
<div class="t b" style="right:775px;top:507px;letter-spacing:-0.132px;">Tons:</div>
<div class="t " style="left:229px;top:507px;letter-spacing:0.326px;">110740</div>
<div class="t b" style="right:775px;top:529px;letter-spacing:-0.056px;">Notes:</div>
<div class="t " style="left:229px;top:529px;"></div>
<div class="t b" style="right:668px;top:463px;letter-spacing:-0.223px;">Label:</div>
<div class="t " style="left:336px;top:463px;"></div>
<div class="t b" style="right:668px;top:485px;letter-spacing:-0.110px;">Location:</div>
<div class="t " style="left:336px;top:485px;letter-spacing:0.099px;">84,65 (Takao)</div>
<div class="t b" style="right:668px;top:507px;letter-spacing:-0.167px;">S/F/O/R:</div>
<div class="t " style="left:336px;top:507px;letter-spacing:-0.023px;">67488 / 0 / 0 / 0</div>
<div class="t b" style="right:401px;top:463px;letter-spacing:-0.083px;">Mission:</div>
<div class="t " style="left:603px;top:463px;letter-spacing:0.183px;">Transport</div>
<div class="t b" style="right:401px;top:485px;letter-spacing:-0.111px;">Destination:</div>
<div class="t " style="left:603px;top:485px;letter-spacing:0.173px;">50,84 (Singapore)</div>
<div class="t b" style="right:401px;top:507px;letter-spacing:-0.213px;">Endure/Req:</div>
<div class="t " style="left:603px;top:507px;letter-spacing:0.079px;">296 / 44</div>
<div class="t b" style="right:169px;top:463px;letter-spacing:-0.193px;">Leader:</div>
<div class="t " style="left:835px;top:463px;letter-spacing:0.022px;">LT Kawamura F.</div>
<div class="t b" style="right:169px;top:485px;letter-spacing:-0.067px;">Home Port:</div>
<div class="t " style="left:835px;top:485px;letter-spacing:0.255px;">Singapore</div>
<div class="t b" style="right:169px;top:507px;letter-spacing:0.132px;">Dock:</div>
<div class="t " style="left:835px;top:507px;letter-spacing:0.106px;">0/0</div>
<svg class="a" style="left:487px;top:507px" width="14" height="14"><circle cx="5" cy="5" r="4" fill="#d2e4f6" stroke="#8ea4c2" stroke-width="1.3"/><path d="M8.3,8.3 L11.3,11.5" stroke="#c08a48" stroke-width="2.6" stroke-linecap="round"/><path d="M10.2,10.4 L11.4,11.7" stroke="#8a5a20" stroke-width="2"/></svg>
<svg class="a" style="left:931px;top:463px" width="14" height="14"><circle cx="5" cy="5" r="4" fill="#d2e4f6" stroke="#8ea4c2" stroke-width="1.3"/><path d="M8.3,8.3 L11.3,11.5" stroke="#c08a48" stroke-width="2.6" stroke-linecap="round"/><path d="M10.2,10.4 L11.4,11.7" stroke="#8a5a20" stroke-width="2"/></svg>
<div class="t b" style="left:17px;top:557px;letter-spacing:-0.250px;">Ship</div>
<div class="t b" style="left:229px;top:557px;letter-spacing:-0.221px;">End</div>
<div class="t b" style="left:281px;top:557px;letter-spacing:-0.166px;">Tons</div>
<div class="t b" style="left:334px;top:557px;letter-spacing:-0.086px;">Speed(class)</div>
<div class="t b" style="left:420px;top:557px;letter-spacing:-0.113px;">Ops</div>
<div class="t b" style="left:472px;top:557px;letter-spacing:0.110px;">Air</div>
<div class="t b" style="left:524px;top:557px;letter-spacing:0.216px;">Sys</div>
<div class="t b" style="left:596px;top:557px;letter-spacing:-0.220px;">Flt</div>
<div class="t b" style="left:638px;top:557px;letter-spacing:-0.221px;">Eng</div>
<div class="t b" style="left:690px;top:557px;letter-spacing:-0.136px;">Fires</div>
<div class="t b" style="left:742px;top:557px;letter-spacing:-0.110px;">Trp</div>
<div class="t b" style="left:784px;top:557px;letter-spacing:0.066px;">Cargo</div>
<div class="a" style="left:7px;top:440px;width:966px;height:335px;overflow:hidden">
<div class="t " style="left:10px;top:133px;letter-spacing:-0.024px;">PB Chiyo Maru #4</div>
<div class="t " style="left:222px;top:133px;letter-spacing:0.326px;">5983</div>
<div class="t " style="left:274px;top:133px;letter-spacing:0.326px;">2780</div>
<div class="t " style="left:327px;top:133px;letter-spacing:0.045px;">0( 14 )</div>
<div class="t " style="left:413px;top:133px;letter-spacing:0.326px;">0</div>
<div class="t " style="left:465px;top:133px;letter-spacing:0.004px;">-</div>
<div class="t " style="left:517px;top:133px;letter-spacing:0.326px;">0</div>
<div class="t " style="left:589px;top:133px;letter-spacing:0.326px;">0</div>
<div class="t " style="left:631px;top:133px;letter-spacing:0.326px;">0</div>
<div class="t " style="left:683px;top:133px;letter-spacing:0.326px;">0</div>
<div class="t " style="left:735px;top:133px;letter-spacing:0.326px;">0</div>
<div class="t " style="left:10px;top:149px;letter-spacing:-0.224px;">xAK Kyusyu Maru</div>
<div class="t " style="left:222px;top:149px;letter-spacing:0.326px;">12956</div>
<div class="t " style="left:274px;top:149px;letter-spacing:0.326px;">6400</div>
<div class="t " style="left:327px;top:149px;letter-spacing:0.045px;">0( 15 )</div>
<div class="t " style="left:413px;top:149px;letter-spacing:0.326px;">0</div>
<div class="t " style="left:465px;top:149px;letter-spacing:0.004px;">-</div>
<div class="t " style="left:517px;top:149px;letter-spacing:0.326px;">0</div>
<div class="t " style="left:589px;top:149px;letter-spacing:0.326px;">0</div>
<div class="t " style="left:631px;top:149px;letter-spacing:0.326px;">0</div>
<div class="t " style="left:683px;top:149px;letter-spacing:0.326px;">0</div>
<div class="t " style="left:735px;top:149px;letter-spacing:0.326px;">0</div>
<div class="t " style="left:777px;top:149px;letter-spacing:0.215px;">S=4218</div>
<div class="t " style="left:10px;top:165px;letter-spacing:-0.145px;">xAK Sinko Maru</div>
<div class="t " style="left:222px;top:165px;letter-spacing:0.326px;">12956</div>
<div class="t " style="left:274px;top:165px;letter-spacing:0.326px;">6400</div>
<div class="t " style="left:327px;top:165px;letter-spacing:0.045px;">0( 15 )</div>
<div class="t " style="left:413px;top:165px;letter-spacing:0.326px;">0</div>
<div class="t " style="left:465px;top:165px;letter-spacing:0.004px;">-</div>
<div class="t " style="left:517px;top:165px;letter-spacing:0.326px;">0</div>
<div class="t " style="left:589px;top:165px;letter-spacing:0.326px;">0</div>
<div class="t " style="left:631px;top:165px;letter-spacing:0.326px;">0</div>
<div class="t " style="left:683px;top:165px;letter-spacing:0.326px;">0</div>
<div class="t " style="left:735px;top:165px;letter-spacing:0.326px;">0</div>
<div class="t " style="left:777px;top:165px;letter-spacing:0.215px;">S=4218</div>
<div class="t " style="left:10px;top:181px;letter-spacing:-0.074px;">xAK Kosin Maru</div>
<div class="t " style="left:222px;top:181px;letter-spacing:0.326px;">12956</div>
<div class="t " style="left:274px;top:181px;letter-spacing:0.326px;">6400</div>
<div class="t " style="left:327px;top:181px;letter-spacing:0.045px;">0( 15 )</div>
<div class="t " style="left:413px;top:181px;letter-spacing:0.326px;">0</div>
<div class="t " style="left:465px;top:181px;letter-spacing:0.004px;">-</div>
<div class="t " style="left:517px;top:181px;letter-spacing:0.326px;">0</div>
<div class="t " style="left:589px;top:181px;letter-spacing:0.326px;">0</div>
<div class="t " style="left:631px;top:181px;letter-spacing:0.326px;">0</div>
<div class="t " style="left:683px;top:181px;letter-spacing:0.326px;">0</div>
<div class="t " style="left:735px;top:181px;letter-spacing:0.326px;">0</div>
<div class="t " style="left:777px;top:181px;letter-spacing:0.215px;">S=4218</div>
<div class="t " style="left:10px;top:197px;letter-spacing:-0.192px;">xAK Nitti Maru</div>
<div class="t " style="left:222px;top:197px;letter-spacing:0.326px;">12956</div>
<div class="t " style="left:274px;top:197px;letter-spacing:0.326px;">6400</div>
<div class="t " style="left:327px;top:197px;letter-spacing:0.045px;">0( 15 )</div>
<div class="t " style="left:413px;top:197px;letter-spacing:0.326px;">0</div>
<div class="t " style="left:465px;top:197px;letter-spacing:0.004px;">-</div>
<div class="t " style="left:517px;top:197px;letter-spacing:0.326px;">0</div>
<div class="t " style="left:589px;top:197px;letter-spacing:0.326px;">0</div>
<div class="t " style="left:631px;top:197px;letter-spacing:0.326px;">0</div>
<div class="t " style="left:683px;top:197px;letter-spacing:0.326px;">0</div>
<div class="t " style="left:735px;top:197px;letter-spacing:0.326px;">0</div>
<div class="t " style="left:777px;top:197px;letter-spacing:0.215px;">S=4218</div>
<div class="t " style="left:10px;top:213px;letter-spacing:-0.106px;">xAK Nitiran Maru</div>
<div class="t " style="left:222px;top:213px;letter-spacing:0.326px;">12956</div>
<div class="t " style="left:274px;top:213px;letter-spacing:0.326px;">6400</div>
<div class="t " style="left:327px;top:213px;letter-spacing:0.045px;">0( 15 )</div>
<div class="t " style="left:413px;top:213px;letter-spacing:0.326px;">0</div>
<div class="t " style="left:465px;top:213px;letter-spacing:0.004px;">-</div>
<div class="t " style="left:517px;top:213px;letter-spacing:0.326px;">0</div>
<div class="t " style="left:589px;top:213px;letter-spacing:0.326px;">0</div>
<div class="t " style="left:631px;top:213px;letter-spacing:0.326px;">0</div>
<div class="t " style="left:683px;top:213px;letter-spacing:0.326px;">0</div>
<div class="t " style="left:735px;top:213px;letter-spacing:0.326px;">0</div>
<div class="t " style="left:777px;top:213px;letter-spacing:0.215px;">S=4218</div>
<div class="t " style="left:10px;top:229px;letter-spacing:-0.092px;">xAK Nagara Maru</div>
<div class="t " style="left:222px;top:229px;letter-spacing:0.326px;">12956</div>
<div class="t " style="left:274px;top:229px;letter-spacing:0.326px;">6400</div>
<div class="t " style="left:327px;top:229px;letter-spacing:0.045px;">0( 15 )</div>
<div class="t " style="left:413px;top:229px;letter-spacing:0.326px;">0</div>
<div class="t " style="left:465px;top:229px;letter-spacing:0.004px;">-</div>
<div class="t " style="left:517px;top:229px;letter-spacing:0.326px;">0</div>
<div class="t " style="left:589px;top:229px;letter-spacing:0.326px;">0</div>
<div class="t " style="left:631px;top:229px;letter-spacing:0.326px;">0</div>
<div class="t " style="left:683px;top:229px;letter-spacing:0.065px;">1 (1)</div>
<div class="t " style="left:735px;top:229px;letter-spacing:0.326px;">0</div>
<div class="t " style="left:777px;top:229px;letter-spacing:0.215px;">S=4218</div>
<div class="t " style="left:10px;top:245px;letter-spacing:-0.136px;">xAK Naruto Maru</div>
<div class="t " style="left:222px;top:245px;letter-spacing:0.326px;">12970</div>
<div class="t " style="left:274px;top:245px;letter-spacing:0.326px;">6400</div>
<div class="t " style="left:327px;top:245px;letter-spacing:0.045px;">0( 15 )</div>
<div class="t " style="left:413px;top:245px;letter-spacing:0.326px;">0</div>
<div class="t " style="left:465px;top:245px;letter-spacing:0.004px;">-</div>
<div class="t " style="left:517px;top:245px;letter-spacing:0.326px;">0</div>
<div class="t " style="left:589px;top:245px;letter-spacing:0.326px;">0</div>
<div class="t " style="left:631px;top:245px;letter-spacing:0.326px;">0</div>
<div class="t " style="left:683px;top:245px;letter-spacing:0.326px;">0</div>
<div class="t " style="left:735px;top:245px;letter-spacing:0.326px;">0</div>
<div class="t " style="left:777px;top:245px;letter-spacing:0.215px;">S=4218</div>
<div class="t " style="left:10px;top:261px;letter-spacing:-0.113px;">xAK Nozima Maru</div>
<div class="t " style="left:222px;top:261px;letter-spacing:0.326px;">12978</div>
<div class="t " style="left:274px;top:261px;letter-spacing:0.326px;">6400</div>
<div class="t " style="left:327px;top:261px;letter-spacing:0.045px;">0( 15 )</div>
<div class="t " style="left:413px;top:261px;letter-spacing:0.326px;">0</div>
<div class="t " style="left:465px;top:261px;letter-spacing:0.004px;">-</div>
<div class="t " style="left:517px;top:261px;letter-spacing:0.326px;">0</div>
<div class="t " style="left:589px;top:261px;letter-spacing:0.326px;">0</div>
<div class="t " style="left:631px;top:261px;letter-spacing:0.326px;">0</div>
<div class="t " style="left:683px;top:261px;letter-spacing:0.326px;">0</div>
<div class="t " style="left:735px;top:261px;letter-spacing:0.326px;">0</div>
<div class="t " style="left:777px;top:261px;letter-spacing:0.215px;">S=4218</div>
<div class="t " style="left:10px;top:277px;letter-spacing:-0.043px;">xAK Nitisan Maru</div>
<div class="t " style="left:222px;top:277px;letter-spacing:0.326px;">12978</div>
<div class="t " style="left:274px;top:277px;letter-spacing:0.326px;">6400</div>
<div class="t " style="left:327px;top:277px;letter-spacing:0.045px;">0( 15 )</div>
<div class="t " style="left:413px;top:277px;letter-spacing:0.326px;">0</div>
<div class="t " style="left:465px;top:277px;letter-spacing:0.004px;">-</div>
<div class="t " style="left:517px;top:277px;letter-spacing:0.326px;">0</div>
<div class="t " style="left:589px;top:277px;letter-spacing:0.326px;">0</div>
<div class="t " style="left:631px;top:277px;letter-spacing:0.326px;">0</div>
<div class="t " style="left:683px;top:277px;letter-spacing:0.326px;">0</div>
<div class="t " style="left:735px;top:277px;letter-spacing:0.326px;">0</div>
<div class="t " style="left:777px;top:277px;letter-spacing:0.215px;">S=4218</div>
<div class="t " style="left:10px;top:293px;letter-spacing:-0.061px;">xAK Huzikawa Maru</div>
<div class="t " style="left:222px;top:293px;letter-spacing:0.326px;">12978</div>
<div class="t " style="left:274px;top:293px;letter-spacing:0.326px;">6400</div>
<div class="t " style="left:327px;top:293px;letter-spacing:0.045px;">0( 15 )</div>
<div class="t " style="left:413px;top:293px;letter-spacing:0.326px;">0</div>
<div class="t " style="left:465px;top:293px;letter-spacing:0.004px;">-</div>
<div class="t " style="left:517px;top:293px;letter-spacing:0.326px;">0</div>
<div class="t " style="left:589px;top:293px;letter-spacing:0.326px;">0</div>
<div class="t " style="left:631px;top:293px;letter-spacing:0.326px;">0</div>
<div class="t " style="left:683px;top:293px;letter-spacing:0.326px;">0</div>
<div class="t " style="left:735px;top:293px;letter-spacing:0.326px;">0</div>
<div class="t " style="left:777px;top:293px;letter-spacing:0.215px;">S=4218</div>
<div class="t " style="left:10px;top:309px;letter-spacing:0.013px;">xAK Shinanogawa Maru</div>
<div class="t " style="left:222px;top:309px;letter-spacing:0.326px;">12978</div>
<div class="t " style="left:274px;top:309px;letter-spacing:0.326px;">6400</div>
<div class="t " style="left:327px;top:309px;letter-spacing:0.045px;">0( 15 )</div>
<div class="t " style="left:413px;top:309px;letter-spacing:0.326px;">0</div>
<div class="t " style="left:465px;top:309px;letter-spacing:0.004px;">-</div>
<div class="t " style="left:517px;top:309px;letter-spacing:0.326px;">0</div>
<div class="t " style="left:589px;top:309px;letter-spacing:0.326px;">0</div>
<div class="t " style="left:631px;top:309px;letter-spacing:0.326px;">0</div>
<div class="t " style="left:683px;top:309px;letter-spacing:0.326px;">0</div>
<div class="t " style="left:735px;top:309px;letter-spacing:0.326px;">0</div>
<div class="t " style="left:777px;top:309px;letter-spacing:0.215px;">S=4218</div>
<div class="t " style="left:10px;top:325px;letter-spacing:-0.241px;">xAK Tenyo Maru</div>
<div class="t " style="left:222px;top:325px;letter-spacing:0.326px;">12978</div>
<div class="t " style="left:274px;top:325px;letter-spacing:0.326px;">6400</div>
<div class="t " style="left:327px;top:325px;letter-spacing:0.045px;">0( 15 )</div>
<div class="t " style="left:413px;top:325px;letter-spacing:0.326px;">0</div>
<div class="t " style="left:465px;top:325px;letter-spacing:0.004px;">-</div>
<div class="t " style="left:517px;top:325px;letter-spacing:0.326px;">0</div>
<div class="t " style="left:589px;top:325px;letter-spacing:0.326px;">0</div>
<div class="t " style="left:631px;top:325px;letter-spacing:0.326px;">0</div>
<div class="t " style="left:683px;top:325px;letter-spacing:0.326px;">0</div>
<div class="t " style="left:735px;top:325px;letter-spacing:0.326px;">0</div>
<div class="t " style="left:777px;top:325px;letter-spacing:0.215px;">S=4218</div>
</div>
<div class="a " style="left:973px;top:440px;width:15px;height:335px;background:#eeeeee"></div>
<div class="a gradh" style="left:974px;top:456px;width:14px;height:228px;"></div>
<div class="a " style="left:977px;top:568px;width:9px;height:1px;background:#505a80"></div>
<div class="a " style="left:977px;top:570px;width:9px;height:1px;background:#505a80"></div>
<div class="a " style="left:977px;top:572px;width:9px;height:1px;background:#505a80"></div>
<div class="a " style="left:973px;top:440px;width:1px;height:335px;background:#7a8a99"></div>
<div class="a " style="left:988px;top:440px;width:1px;height:351px;background:#7a8a99"></div>
<div class="a " style="left:973px;top:439px;width:16px;height:1px;background:#7a8a99"></div>
<div class="a " style="left:974px;top:440px;width:14px;height:1px;background:#fff"></div>
<div class="a " style="left:974px;top:440px;width:1px;height:15px;background:#fff"></div>
<div class="a " style="left:974px;top:455px;width:14px;height:1px;background:#7a8a99"></div>
<svg class="a" style="left:977px;top:445px" width="8" height="4"><polygon points="0,4 8,4 4.0,0" fill="#222"/></svg>
<div class="a " style="left:974px;top:684px;width:14px;height:1px;background:#7a8a99"></div>
<div class="a " style="left:974px;top:759px;width:14px;height:1px;background:#7a8a99"></div>
<div class="a " style="left:975px;top:760px;width:13px;height:1px;background:#fff"></div>
<div class="a " style="left:974px;top:760px;width:1px;height:14px;background:#fff"></div>
<svg class="a" style="left:977px;top:766px" width="8" height="4"><polygon points="0,0 8,0 4.0,4" fill="#222"/></svg>
<div class="a " style="left:7px;top:775px;width:966px;height:15px;background:#eeeeee"></div>
<div class="a grad" style="left:23px;top:776px;width:870px;height:14px;"></div>
<div class="a " style="left:22px;top:775px;width:1px;height:15px;background:#6a7ab0"></div>
<div class="a " style="left:455px;top:779px;width:1px;height:9px;background:#505a80"></div>
<div class="a " style="left:457px;top:779px;width:1px;height:9px;background:#505a80"></div>
<div class="a " style="left:459px;top:779px;width:1px;height:9px;background:#505a80"></div>
<div class="a " style="left:7px;top:775px;width:982px;height:1px;background:#7a8a99"></div>
<div class="a " style="left:7px;top:776px;width:15px;height:1px;background:#fff"></div>
<div class="a " style="left:7px;top:776px;width:1px;height:14px;background:#fff"></div>
<svg class="a" style="left:12px;top:778px" width="4" height="9"><polygon points="4,0 4,9 0,4.5" fill="#222"/></svg>
<div class="a " style="left:957px;top:775px;width:1px;height:15px;background:#7a8a99"></div>
<div class="a " style="left:972px;top:775px;width:1px;height:15px;background:#7a8a99"></div>
<div class="a " style="left:958px;top:776px;width:14px;height:1px;background:#fff"></div>
<div class="a " style="left:958px;top:776px;width:1px;height:14px;background:#fff"></div>
<svg class="a" style="left:964px;top:778px" width="4" height="9"><polygon points="0,0 0,9 4,4.5" fill="#222"/></svg>
<div class="a " style="left:6px;top:790px;width:983px;height:1px;background:#7a8a99"></div>
<div class="a " style="left:7px;top:791px;width:982px;height:1px;background:#fff"></div>
<div class="a grad" style="left:765px;top:798px;width:103px;height:26px;border:1px solid #7a8a99"></div>
<div class="a " style="left:766px;top:799px;width:101px;height:1px;background:#fff"></div>
<div class="a " style="left:766px;top:799px;width:1px;height:24px;background:#fff"></div>
<div class="t b" style="left:766px;width:101px;text-align:center;top:804px;letter-spacing:-0.129px;">Air Groups...</div>
<div class="a grad" style="left:878px;top:798px;width:103px;height:26px;border:1px solid #7a8a99"></div>
<div class="a " style="left:879px;top:799px;width:101px;height:1px;background:#fff"></div>
<div class="a " style="left:879px;top:799px;width:1px;height:24px;background:#fff"></div>
<div class="t b" style="left:915px;top:804px;letter-spacing:-0.035px;">History...</div>
<svg class="a" style="left:894px;top:803px" width="18" height="16"><path d="M2.4,7.4 L9.5,10.5 L15.5,2.3" stroke="#d83838" stroke-width="1.3" fill="none"/><path d="M2.4,12.5 L9.3,6.3 L15.6,7.4" stroke="#3a5aa8" stroke-width="1.3" fill="none"/><rect x="1" y="6" width="3" height="3" fill="#e03a3a"/><rect x="8" y="9" width="3" height="3" fill="#e03a3a"/><path d="M14,1 L17,4 M17,1 L14,4" stroke="#d83838" stroke-width="1.2"/><path d="M1,11 L4,14 M4,11 L1,14 M8,5 L11,8 M11,5 L8,8 M14,6 L17,9 M17,6 L14,9" stroke="#3a5aa8" stroke-width="1.2"/></svg>
<div class="t b" style="left:8px;top:843px;letter-spacing:-0.127px;">War in the Pacific: The Full Campaign</div>
<div class="t b" style="left:367px;top:843px;letter-spacing:-0.023px;">Last turn loaded: 256 (08/19/42)</div>
<div class="a " style="left:692px;top:840px;width:294px;height:21px;border:1px solid #7a8a99;background:#eeeeee"></div>
<div class="a " style="left:693px;top:841px;width:292px;height:1px;background:#fff"></div>
<div class="a " style="left:665px;top:317px;width:211px;height:81px;background:#b8cfe5;border:1px solid #64749a"></div>
<div class="t " style="left:669px;top:319px;letter-spacing:0.255px;">Singapore</div>
<div class="t " style="left:669px;top:335px;letter-spacing:0.129px;">Troop Load Rate= 1850 / 150500</div>
<div class="t " style="left:669px;top:351px;letter-spacing:0.187px;">Supplies Load Rate= 1800 / 150500</div>
<div class="t " style="left:669px;top:367px;letter-spacing:0.177px;">Resource Load Rate= 1850 / 150760</div>
<div class="t " style="left:669px;top:383px;letter-spacing:0.111px;">Oil/Fuel Load Rate= 9375 / 13750</div>
<div class="a " style="left:492px;top:533px;width:288px;height:66px;background:#b8cfe5;border:1px solid #64749a"></div>
<div class="t " style="left:496px;top:535px;letter-spacing:0.120px;">Est. Load/Offload times at Destination</div>
<div class="t " style="left:496px;top:551px;letter-spacing:0.151px;">(Depends on docking and other TF's)</div>
<div class="t " style="left:496px;top:567px;letter-spacing:0.110px;">TF cargo:67488 Base Daily Cargo Capacity:150760</div>
<div class="t " style="left:496px;top:583px;letter-spacing:0.016px;">Time to offload: 3</div>
<svg class="a" style="left:0;top:0" width="999" height="872"><rect x="783.25" y="349.25" width="37.5" height="16.75" rx="4.5" fill="none" stroke="#e8141c" stroke-width="4.5"/><polygon points="787.5,370.5 825.5,370.5 825.5,479.5 845.5,479.5 806,589 767.5,479.5 787.5,479.5" fill="#fff" stroke="#b83030" stroke-width="1"/></svg>
<div class="a " style="left:996px;top:0px;width:3px;height:20px;background:#4a4f6a"></div>
<div class="a " style="left:996px;top:20px;width:3px;height:26px;background:#e6e8f2"></div>
<div class="a " style="left:996px;top:46px;width:3px;height:9px;background:#fff"></div>
<div class="a " style="left:996px;top:55px;width:3px;height:25px;background:linear-gradient(#1a1ae0,#5060d0)"></div>
<div class="a " style="left:996px;top:80px;width:3px;height:55px;background:#fff"></div>
<div class="a " style="left:996px;top:135px;width:3px;height:700px;background:#c8d0e0"></div>
<div class="a " style="left:996px;top:835px;width:3px;height:10px;background:#fff"></div>
<div class="a " style="left:996px;top:845px;width:3px;height:1px;background:#a0a0a8"></div>
<div class="a " style="left:996px;top:846px;width:3px;height:20px;background:#ececf0"></div>
<div class="a " style="left:0px;top:866px;width:999px;height:6px;background:#fff"></div>
<div class="a " style="left:14px;top:865px;width:969px;height:1px;background:#2a3560"></div>
<div class="a " style="left:0px;top:870px;width:999px;height:1px;background:#2a3560"></div>
<div class="a " style="left:0px;top:871px;width:999px;height:1px;background:#9aa4b8"></div>
<svg class="a" style="left:10px;top:866px" width="36" height="6"><circle cx="17" cy="14" r="13" fill="#8aa0b8" stroke="#333" stroke-width="1"/></svg>
</div></body></html>
